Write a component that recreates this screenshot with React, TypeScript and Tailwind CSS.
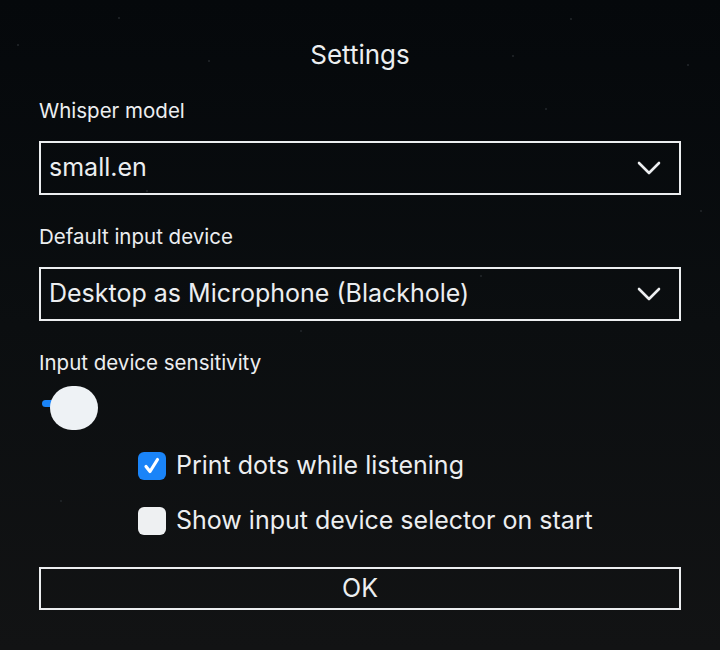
import React from "react";

function Chevron() {
  return (
    <svg width="24" height="14" viewBox="0 0 24 14" fill="none" className="shrink-0">
      <polyline points="2,2 12,12 22,2" stroke="#eceef0" strokeWidth="2.6" strokeLinecap="round" strokeLinejoin="round" />
    </svg>
  );
}

function Select({ value }: { value: string }) {
  return (
    <div className="flex h-[54px] items-center justify-between border-2 border-[#eceef0] pl-[8px] pr-[18px]">
      <span className="text-[25px] text-[#eceef0]">{value}</span>
      <Chevron />
    </div>
  );
}

function Check({ checked, label }: { checked: boolean; label: string }) {
  return (
    <div className="flex h-[28px] items-center gap-[10px]">
      {checked ? (
        <div className="flex h-[28px] w-[28px] items-center justify-center rounded-[6px] bg-[#1a84f8]">
          <svg width="20" height="20" viewBox="0 0 20 20" fill="none">
            <polyline points="4,10.5 8,15.5 15.5,3.5" stroke="white" strokeWidth="3.2" strokeLinecap="round" strokeLinejoin="round" />
          </svg>
        </div>
      ) : (
        <div className="h-[28px] w-[28px] rounded-[6px] bg-[#eef0f2]" />
      )}
      <span className="text-[25px] text-[#eceef0]">{label}</span>
    </div>
  );
}

const stars = [
  [17, 44], [118, 17], [208, 60], [335, 48], [512, 55], [570, 18], [687, 64], [146, 190], [545, 108], [95, 239], [480, 275], [700, 210], [300, 330], [60, 500],
];

export default function App() {
  return (
    <div className="relative h-[650px] w-[720px] overflow-hidden bg-gradient-to-b from-[#05080b] via-[#0b0e10] to-[#121314] font-['Inter',sans-serif] text-[#eceef0]">
      {stars.map(([x, y], i) => (
        <div key={i} className="absolute h-[2px] w-[2px] rounded-full bg-[#23272b]" style={{ left: x, top: y }} />
      ))}
      <div className="relative flex flex-col px-[39px] pt-[40px]">
        <h1 className="text-center text-[26px] leading-[30px]">Settings</h1>

        <label className="mt-[29px] text-[20.5px] leading-[24px]">Whisper model</label>
        <div className="mt-[18px]">
          <Select value="small.en" />
        </div>

        <label className="mt-[30px] text-[20.5px] leading-[24px]">Default input device</label>
        <div className="mt-[18px]">
          <Select value="Desktop as Microphone (Blackhole)" />
        </div>

        <label className="mt-[30px] text-[20.5px] leading-[24px]">Input device sensitivity</label>
        <div className="relative mt-[11px] h-[44px]">
          <div className="absolute left-[3px] top-[14px] h-[7px] w-[14px] rounded-full bg-[#1a84f8]" />
          <div className="absolute left-[11px] top-0 h-[44px] w-[48px] rounded-full bg-[#eef2f5]" />
        </div>

        <div className="mt-[22px] flex flex-col gap-[27px] pl-[99px]">
          <Check checked label="Print dots while listening" />
          <Check checked={false} label="Show input device selector on start" />
        </div>

        <button className="mt-[32px] flex h-[43px] items-center justify-center border-2 border-[#eceef0] text-[25px] text-[#eceef0]">
          OK
        </button>
      </div>
    </div>
  );
}
